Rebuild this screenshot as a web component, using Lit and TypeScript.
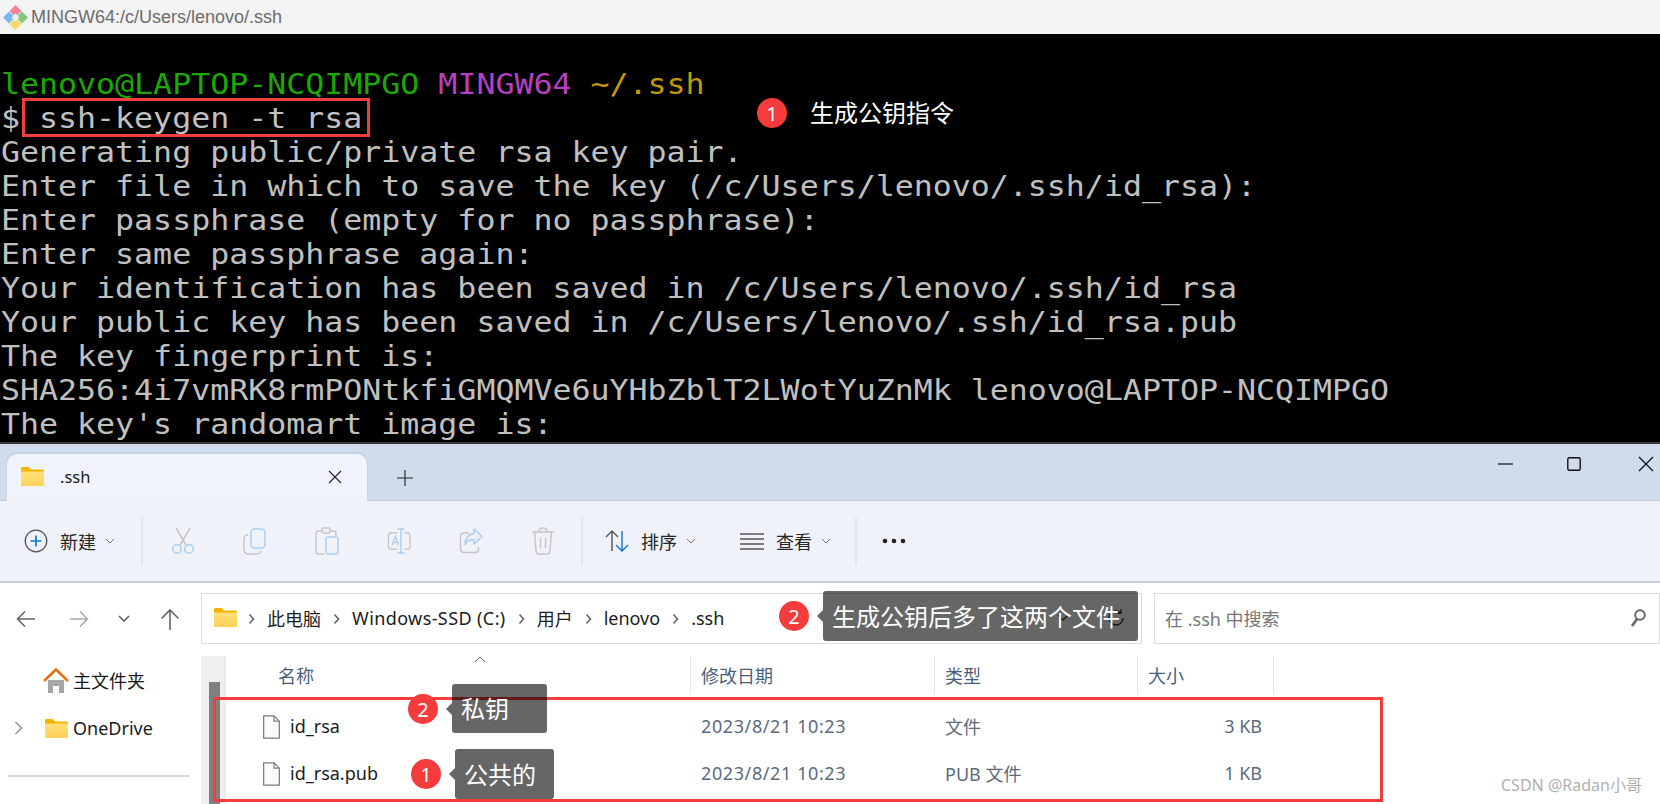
import { LitElement, html, css, svg } from "lit";
import { customElement } from "lit/decorators.js";

const folder = svg`<svg class="folder" viewBox="0 0 23 19"><defs><linearGradient id="fg" x1="0" y1="0" x2="0" y2="1"><stop offset="0" stop-color="#ffe07a"/><stop offset="1" stop-color="#ffd257"/></linearGradient></defs><path d="M0 1.500C0 .7.7 0 1.500 0h6L10 2.500h11.500c.8 0 1.500.7 1.500 1.500v13.500c0 .8-.7 1.500-1.500 1.500h-20C.7 19 0 18.300 0 17.500z" fill="#f5b400"/><path d="M0 4.500h23v13c0 .8-.7 1.500-1.500 1.500h-20C.7 19 0 18.300 0 17.500z" fill="url(#fg)"/></svg>`;
const chevDown = svg`<svg class="chev" viewBox="0 0 10 6"><path d="M1 1l4 4 4-4" fill="none" stroke="#777" stroke-width="1"/></svg>`;
const crumb = svg`<svg class="crumb" viewBox="0 0 7 12"><path d="M1.500 1.500L5.500 6l-4 4.500" fill="none" stroke="#666" stroke-width="1.600"/></svg>`;
const fileIcon = svg`<svg class="file" viewBox="0 0 18 25"><path d="M.7.7h11l5.600 5.600v18H.7z" fill="#fafafa" stroke="#7d7d7d" stroke-width="1.300"/><path d="M11.700.7v5.600h5.600" fill="none" stroke="#7d7d7d" stroke-width="1.300"/></svg>`;

const G = "#c6c6c6";
const B = "#a9cff2";
const toolIcons = [
  svg`<svg class="ti" viewBox="0 0 24 28"><path d="M5 1l10 17M19 1L9 18" fill="none" stroke="${G}" stroke-width="1.500"/><circle cx="6" cy="22" r="4.300" fill="none" stroke="${B}" stroke-width="1.500"/><circle cx="18" cy="22" r="4.300" fill="none" stroke="${B}" stroke-width="1.500"/></svg>`,
  svg`<svg class="ti" viewBox="0 0 24 28"><path d="M5 7.500C2.500 8 1 9.500 1 12v10c0 3 2 5 5 5h7c2.500 0 4-1 5-3" fill="none" stroke="${G}" stroke-width="1.500"/><rect x="8" y="2" width="14" height="19" rx="3.500" fill="none" stroke="${B}" stroke-width="1.500"/></svg>`,
  svg`<svg class="ti" viewBox="0 0 24 28"><path d="M9 27H3.500C2 27 1 26 1 24.500V6.500C1 5 2 4 3.500 4H7M15 4h3.500C20 4 21 5 21 6.500V9" fill="none" stroke="${G}" stroke-width="1.500"/><rect x="7" y="1" width="8" height="5" rx="1.500" fill="none" stroke="${G}" stroke-width="1.500"/><rect x="11" y="10" width="12" height="17" rx="2.500" fill="none" stroke="${B}" stroke-width="1.500"/></svg>`,
  svg`<svg class="ti" viewBox="0 0 26 28"><path d="M11 5H5C3 5 1.500 6.500 1.500 8.500v11C1.500 21.500 3 23 5 23h6M19 5h2.500c2 0 3.500 1.500 3.500 3.500v11c0 2-1.500 3.500-3.500 3.500H19" fill="none" stroke="${G}" stroke-width="1.500"/><path d="M11 1h8M15 1v26M11 27h8" fill="none" stroke="${B}" stroke-width="1.500"/><path d="M5.500 18.500L9 9l3.500 9.500M6.700 15.500h4.600" fill="none" stroke="${B}" stroke-width="1.400"/></svg>`,
  svg`<svg class="ti" viewBox="0 0 24 28"><path d="M10 6H5C3 6 1.500 7.500 1.500 9.500V22c0 2 1.500 3.500 3.500 3.500h11c2 0 3.500-1.500 3.500-3.500v-2" fill="none" stroke="${G}" stroke-width="1.500"/><path d="M15 2l8 7.500-8 7.500v-4.500c-4 0-7 1-9 5 0-6 3-10 9-11z" fill="none" stroke="${B}" stroke-width="1.500" stroke-linejoin="round"/></svg>`,
  svg`<svg class="ti" viewBox="0 0 24 28"><path d="M1 5h22M8 5c0-2.500 1-4 4-4s4 1.500 4 4M3.500 5l1.500 19c.2 2 1.300 3 3 3h8c1.700 0 2.800-1 3-3l1.500-19M9.500 11v10M14.500 11v10" fill="none" stroke="${G}" stroke-width="1.500"/></svg>`,
];

const lines = [
  "Generating public/private rsa key pair.",
  "Enter file in which to save the key (/c/Users/lenovo/.ssh/id_rsa):",
  "Enter passphrase (empty for no passphrase):",
  "Enter same passphrase again:",
  "Your identification has been saved in /c/Users/lenovo/.ssh/id_rsa",
  "Your public key has been saved in /c/Users/lenovo/.ssh/id_rsa.pub",
  "The key fingerprint is:",
  "SHA256:4i7vmRK8rmPONtkfiGMQMVe6uYHbZblT2LWotYuZnMk lenovo@LAPTOP-NCQIMPGO",
  "The key's randomart image is:",
];

@customElement("app-root")
export class AppRoot extends LitElement {
  static styles = css`
    :host { display: block; position: relative; width: 1660px; height: 804px; overflow: hidden; background: #fff;
      font-family: "Noto Sans", "Noto Sans CJK SC", sans-serif; color: #1a1a1a; }
    .titlebar { height: 34px; background: #f3f3f3; display: flex; align-items: center; padding-left: 3px; gap: 3px;
      font-size: 18px; color: #6c6c6c; font-family: "Liberation Sans", sans-serif; }
    .gitlogo { width: 25px; height: 25px; }
    .term { height: 374px; padding-top: 34px; padding-left: 1px; background: #000; color: #c0c0c0; overflow: hidden;
      font-family: "DejaVu Sans Mono", monospace; font-size: 28px; }
    .tl { height: 34px; line-height: 34px; white-space: pre; transform: scaleX(1.128); transform-origin: 0 0; }
    .g { color: #1ca800; } .m { color: #b540c0; } .y { color: #c09a00; }
    .explorer { height: 362px; border-top: 2px solid #3a3a3a; display: flex; flex-direction: column; box-sizing: border-box; }
    .tabs { height: 57px; box-sizing: border-box; flex: none; background: #cfdcec; border-bottom: 1px solid #bfcfdf; display: flex; align-items: flex-end; padding-left: 7px; position: relative; }
    .tab { width: 360px; height: 47px; box-sizing: border-box; background: #f0f3f9; border-radius: 10px 10px 0 0; box-shadow: 0 -1px 0 1px #c4d2e4; display: flex; align-items: center; padding: 0 0 2px 14px; font-size: 16.500px; margin-bottom: -1px; }
    .tab .name { margin-left: 16px; flex: 1; }
    .tab .x { width: 14px; height: 14px; margin-right: 25px; }
    .plus { width: 16px; height: 16px; margin: 0 0 14px 30px; }
    .winctl { margin-left: auto; display: flex; align-self: flex-start; align-items: center; height: 40px; }
    .winctl svg { display: block; }
    .w-min { width: 15px; height: 2px; margin-right: 54px; }
    .w-max { width: 14px; height: 14px; margin-right: 57px; }
    .w-close { width: 16px; height: 16px; margin-right: 6px; }
    .toolbar { height: 82px; box-sizing: border-box; flex: none; background: #eff3f9; border-bottom: 2px solid #c1cfdc; display: flex; align-items: center; padding-left: 24px; font-size: 18px; }
    .sep { width: 2px; height: 48px; background: #e2e5ea; flex: none; }
    .ti { width: 24px; height: 28px; display: block; }
    .tool { width: 72px; display: flex; justify-content: center; flex: none; }
    .chev { width: 10px; height: 6px; flex: none; display: block; }
    .chevwrap { display: flex; flex: none; margin-left: 9px; }
    .ic24 { width: 24px; height: 24px; flex: none; }
    .lbl { color: #262626; margin-left: 12px; white-space: nowrap; }
    .s1 { margin-left: 26px; } .g0 { margin-left: 4px; } .s2 { margin-left: 2px; }
    .sort { margin-left: 22px; } .view { margin-left: 44px; } .s3 { margin-left: 24px; }
    .dots { margin-left: 25px; width: 24px; height: 6px; }
    .nav { height: 73px; box-sizing: border-box; flex: none; display: flex; align-items: flex-start; padding: 10px 0 0 0; }
    .navbtns { width: 201px; height: 51px; display: flex; align-items: center; padding-left: 16px; box-sizing: border-box; }
    .navbtns svg { flex: none; }
    .n1 { width: 20px; height: 18px; } .n2 { width: 20px; height: 18px; margin-left: 33px; } .n3 { width: 12px; height: 8px; margin-left: 29px; } .n4 { width: 20px; height: 22px; margin-left: 30px; }
    .addr { width: 941px; height: 51px; box-sizing: border-box; border: 1.500px solid #dcdcdc; display: flex; align-items: center; padding-left: 12px; padding-bottom: 2px; font-size: 18px; color: #1c1c1c; }
    .crumb { width: 7px; height: 12px; margin: 2px 12px 0 12px; flex: none; }
    .folder { width: 23px; height: 19px; flex: none; display: block; }
    .addr .folder { margin-right: -1px; }
    .drive { letter-spacing: .4px; }
    .addr-r { margin-left: auto; display: flex; align-items: center; padding-right: 15px; }
    .a-ch { width: 12px; height: 8px; }
    .a-rf { width: 20px; height: 20px; margin-left: 37px; }
    .search { margin-left: 12px; flex: 1; height: 51px; box-sizing: border-box; border: 1.500px solid #dcdcdc; display: flex; align-items: center; padding-left: 10px; padding-bottom: 2px; color: #777; font-size: 18px; }
    .search .mag { margin-left: auto; margin-right: 13px; width: 16px; height: 20px; }
    .body { flex: 1; display: flex; min-height: 0; }
    .side { width: 201px; flex: none; font-size: 18px; box-sizing: border-box; }
    .sitem { height: 48px; display: flex; align-items: center; white-space: nowrap; }
    .home { width: 26px; height: 25px; margin-left: 43px; margin-right: 4px; flex: none; }
    .arrow { width: 9px; height: 14px; margin-left: 14px; margin-right: 22px; flex: none; }
    .side .folder { margin-right: 5px; }
    .hr { height: 2px; background: #d8d8d8; margin: 23px 11px 0 8px; }
    .track { width: 26px; flex: none; background: linear-gradient(90deg,#efefef 0,#efefef 24px,#e6e6e6 24px,#e6e6e6 25px,#fff 25px); padding-top: 26px; box-sizing: border-box; }
    .thumb { width: 11px; height: 200px; margin-left: 8px; background: #808080; }
    .list { flex: 1; position: relative; }
    .hdr, .row { display: grid; grid-template-columns: 464px 244px 203px 136px; }
    .hdr { height: 38px; color: #4a5f7a; font-size: 18px; margin-bottom: 9px; }
    .hdr > div { display: flex; align-items: center; padding-left: 10px; border-right: 1px solid #e5e5e5; box-sizing: border-box; }
    .hdr > div:first-child { padding-left: 51px; }
    .caret { position: absolute; left: 247px; top: 0; width: 12px; height: 7px; }
    .row { height: 47px; box-sizing: border-box; padding-bottom: 2px; align-items: center; font-size: 18px; color: #5c6b7c; }
    .row .nm { display: flex; align-items: center; padding-left: 36px; color: #1c1c1c; }
    .row .file { width: 17px; height: 24px; margin: 2px 10px 0 0; flex: none; }
    .row .dt { padding-left: 10px; }
    .date { letter-spacing: .6px; }
    .row .sz { text-align: right; padding-right: 12px; }
    .redbox { position: absolute; box-sizing: border-box; border: 3px solid #f53c3c; }
    .rb1 { left: 22px; top: 98px; width: 348px; height: 39px; }
    .rb2 { left: 213px; top: 697px; width: 1170px; height: 105px; }
    .badge { position: absolute; width: 30px; height: 30px; border-radius: 50%; background: #f53b3b; color: #fff; font-size: 20px; display: flex; align-items: center; justify-content: center; }
    .b1 { left: 757px; top: 98px; } .b2 { left: 779px; top: 601px; } .b3 { left: 408px; top: 694px; } .b4 { left: 411px; top: 759px; }
    .note { position: absolute; left: 810px; top: 96px; color: #fff; font-size: 24px; line-height: 34px; white-space: nowrap; }
    .tip { position: absolute; background: rgba(0,0,0,.6); border-radius: 3px; color: #fff; font-size: 24px; display: flex; align-items: center; white-space: nowrap; box-sizing: border-box; padding: 0 0 2px 9px; }
    .tip::before { content: ""; position: absolute; left: -6px; top: 50%; margin-top: -6px; border: 6px solid transparent; border-left: 0; border-right-color: rgba(0,0,0,.6); }
    .t1 { left: 823px; top: 591px; width: 315px; height: 50px; }
    .t2 { left: 452px; top: 684px; width: 95px; height: 49px; }
    .t3 { left: 455px; top: 749px; width: 99px; height: 50px; }
    .wm { position: absolute; left: 1501px; top: 775px; font-size: 16px; color: #b0b0b0; white-space: nowrap; line-height: 20px; }
  `;

  render() {
    return html`
      <div class="titlebar">
        <svg class="gitlogo" viewBox="0 0 25 25">
          <path d="M12.500 0l6 6-6 6-6-6z" fill="#f2849a"/>
          <path d="M6 6.500l6 6-6 6-6-6z" fill="#7db7ea"/>
          <path d="M19 6.500l6 6-6 6-6-6z" fill="#7fc97a"/>
          <path d="M12.500 13l6 6-6 6-6-6z" fill="#f6d86c"/>
          <path d="M12.500 8.500l4 4-4 4-4-4z" fill="#e9eef0"/>
        </svg>
        <span>MINGW64:/c/Users/lenovo/.ssh</span>
      </div>
      <div class="term">
        <div class="tl"><span class="g">lenovo@LAPTOP-NCQIMPGO</span> <span class="m">MINGW64</span> <span class="y">~/.ssh</span></div>
        <div class="tl">$ ssh-keygen -t rsa</div>
        ${lines.map((l) => html`<div class="tl">${l}</div>`)}
      </div>
      <div class="explorer">
        <div class="tabs">
          <div class="tab">
            ${folder}<span class="name">.ssh</span>
            <svg class="x" viewBox="0 0 14 14"><path d="M1 1l12 12M13 1L1 13" stroke="#222" stroke-width="1.100"/></svg>
          </div>
          <svg class="plus" viewBox="0 0 16 16"><path d="M8 0v16M0 8h16" stroke="#222" stroke-width="1.100"/></svg>
          <div class="winctl">
            <svg class="w-min" viewBox="0 0 15 2"><path d="M0 1h15" stroke="#111" stroke-width="1.200"/></svg>
            <svg class="w-max" viewBox="0 0 14 14"><rect x=".8" y=".8" width="12.400" height="12.400" rx="1.500" fill="none" stroke="#111" stroke-width="1.400"/></svg>
            <svg class="w-close" viewBox="0 0 16 16"><path d="M1 1l14 14M15 1L1 15" stroke="#111" stroke-width="1.300"/></svg>
          </div>
        </div>
        <div class="toolbar">
          <svg class="ic24" viewBox="0 0 24 24"><circle cx="12" cy="12" r="10.800" fill="none" stroke="#555" stroke-width="1.300"/><path d="M12 6.500v11M6.500 12h11" stroke="#0a78d4" stroke-width="1.700"/></svg>
          <span class="lbl">新建</span>
          <span class="chevwrap">${chevDown}</span>
          <div class="sep s1"></div>
          <div class="tool g0">${toolIcons[0]}</div>
          ${toolIcons.slice(1).map((i) => html`<div class="tool">${i}</div>`)}
          <div class="sep s2"></div>
          <svg class="ic24 sort" viewBox="0 0 24 24"><path d="M7 22V2M1 8l6-6 6 6" fill="none" stroke="#555" stroke-width="1.400"/><path d="M17 2v20M11 16l6 6 6-6" fill="none" stroke="#0a78d4" stroke-width="1.400"/></svg>
          <span class="lbl">排序</span>
          <span class="chevwrap">${chevDown}</span>
          <svg class="ic24 view" viewBox="0 0 24 24"><path d="M0 5h24M0 10h24M0 15h24M0 20h24" stroke="#555" stroke-width="1.300"/></svg>
          <span class="lbl">查看</span>
          <span class="chevwrap">${chevDown}</span>
          <div class="sep s3"></div>
          <svg class="dots" viewBox="0 0 24 6"><circle cx="3" cy="3" r="2.300" fill="#222"/><circle cx="12" cy="3" r="2.300" fill="#222"/><circle cx="21" cy="3" r="2.300" fill="#222"/></svg>
        </div>
        <div class="nav">
          <div class="navbtns">
            <svg class="n1" viewBox="0 0 20 18"><path d="M19 9H2M9 1.500L1.500 9 9 16.500" fill="none" stroke="#666" stroke-width="1.600"/></svg>
            <svg class="n2" viewBox="0 0 20 18"><path d="M1 9h17M11 1.500L18.500 9 11 16.500" fill="none" stroke="#aaa" stroke-width="1.600"/></svg>
            <svg class="n3" viewBox="0 0 12 8"><path d="M1 1l5 5 5-5" fill="none" stroke="#666" stroke-width="1.600"/></svg>
            <svg class="n4" viewBox="0 0 20 22"><path d="M10 22V2M1.500 10.500L10 2l8.500 8.500" fill="none" stroke="#666" stroke-width="1.600"/></svg>
          </div>
          <div class="addr">
            ${folder}${crumb}<span>此电脑</span>${crumb}<span class="drive">Windows-SSD (C:)</span>${crumb}<span>用户</span>${crumb}<span>lenovo</span>${crumb}<span>.ssh</span>
            <div class="addr-r">
              <svg class="a-ch" viewBox="0 0 12 8"><path d="M1 1l5 5 5-5" fill="none" stroke="#444" stroke-width="1.400"/></svg>
              <svg class="a-rf" viewBox="0 0 20 20"><path d="M17 10a7 7 0 1 1-2.500-5.400M15 1v4h-4" fill="none" stroke="#333" stroke-width="1.400"/></svg>
            </div>
          </div>
          <div class="search">
            <span>在 .ssh 中搜索</span>
            <svg class="mag" viewBox="0 0 16 20"><circle cx="10" cy="7" r="4.800" fill="none" stroke="#666" stroke-width="2"/><path d="M7 11L2 18" stroke="#666" stroke-width="2.600"/></svg>
          </div>
        </div>
        <div class="body">
          <div class="side">
            <div class="sitem">
              <svg class="home" viewBox="0 0 26 25"><path d="M5 12h16v13h-5v-7h-6v7H5z" fill="#a6a6a6"/><path d="M1 13L13 1.500 25 13" fill="none" stroke="#e0701a" stroke-width="2.600"/></svg>
              <span>主文件夹</span>
            </div>
            <div class="sitem">
              <svg class="arrow" viewBox="0 0 9 14"><path d="M1.500 1L7.500 7l-6 6" fill="none" stroke="#888" stroke-width="1.300"/></svg>
              ${folder}<span>OneDrive</span>
            </div>
            <div class="hr"></div>
          </div>
          <div class="track"><div class="thumb"></div></div>
          <div class="list">
            <svg class="caret" viewBox="0 0 12 7"><path d="M1 6l5-5 5 5" fill="none" stroke="#666" stroke-width="1"/></svg>
            <div class="hdr"><div>名称</div><div>修改日期</div><div>类型</div><div>大小</div></div>
            <div class="row"><div class="nm">${fileIcon}<span>id_rsa</span></div><div class="dt date">2023/8/21 10:23</div><div class="dt">文件</div><div class="sz">3 KB</div></div>
            <div class="row"><div class="nm">${fileIcon}<span>id_rsa.pub</span></div><div class="dt date">2023/8/21 10:23</div><div class="dt">PUB 文件</div><div class="sz">1 KB</div></div>
          </div>
        </div>
      </div>
      <div class="redbox rb1"></div>
      <div class="badge b1">1</div>
      <div class="note">生成公钥指令</div>
      <div class="badge b2">2</div>
      <div class="tip t1">生成公钥后多了这两个文件</div>
      <div class="redbox rb2"></div>
      <div class="badge b3">2</div>
      <div class="tip t2">私钥</div>
      <div class="badge b4">1</div>
      <div class="tip t3">公共的</div>
      <div class="wm">CSDN @Radan小哥</div>
    `;
  }
}
